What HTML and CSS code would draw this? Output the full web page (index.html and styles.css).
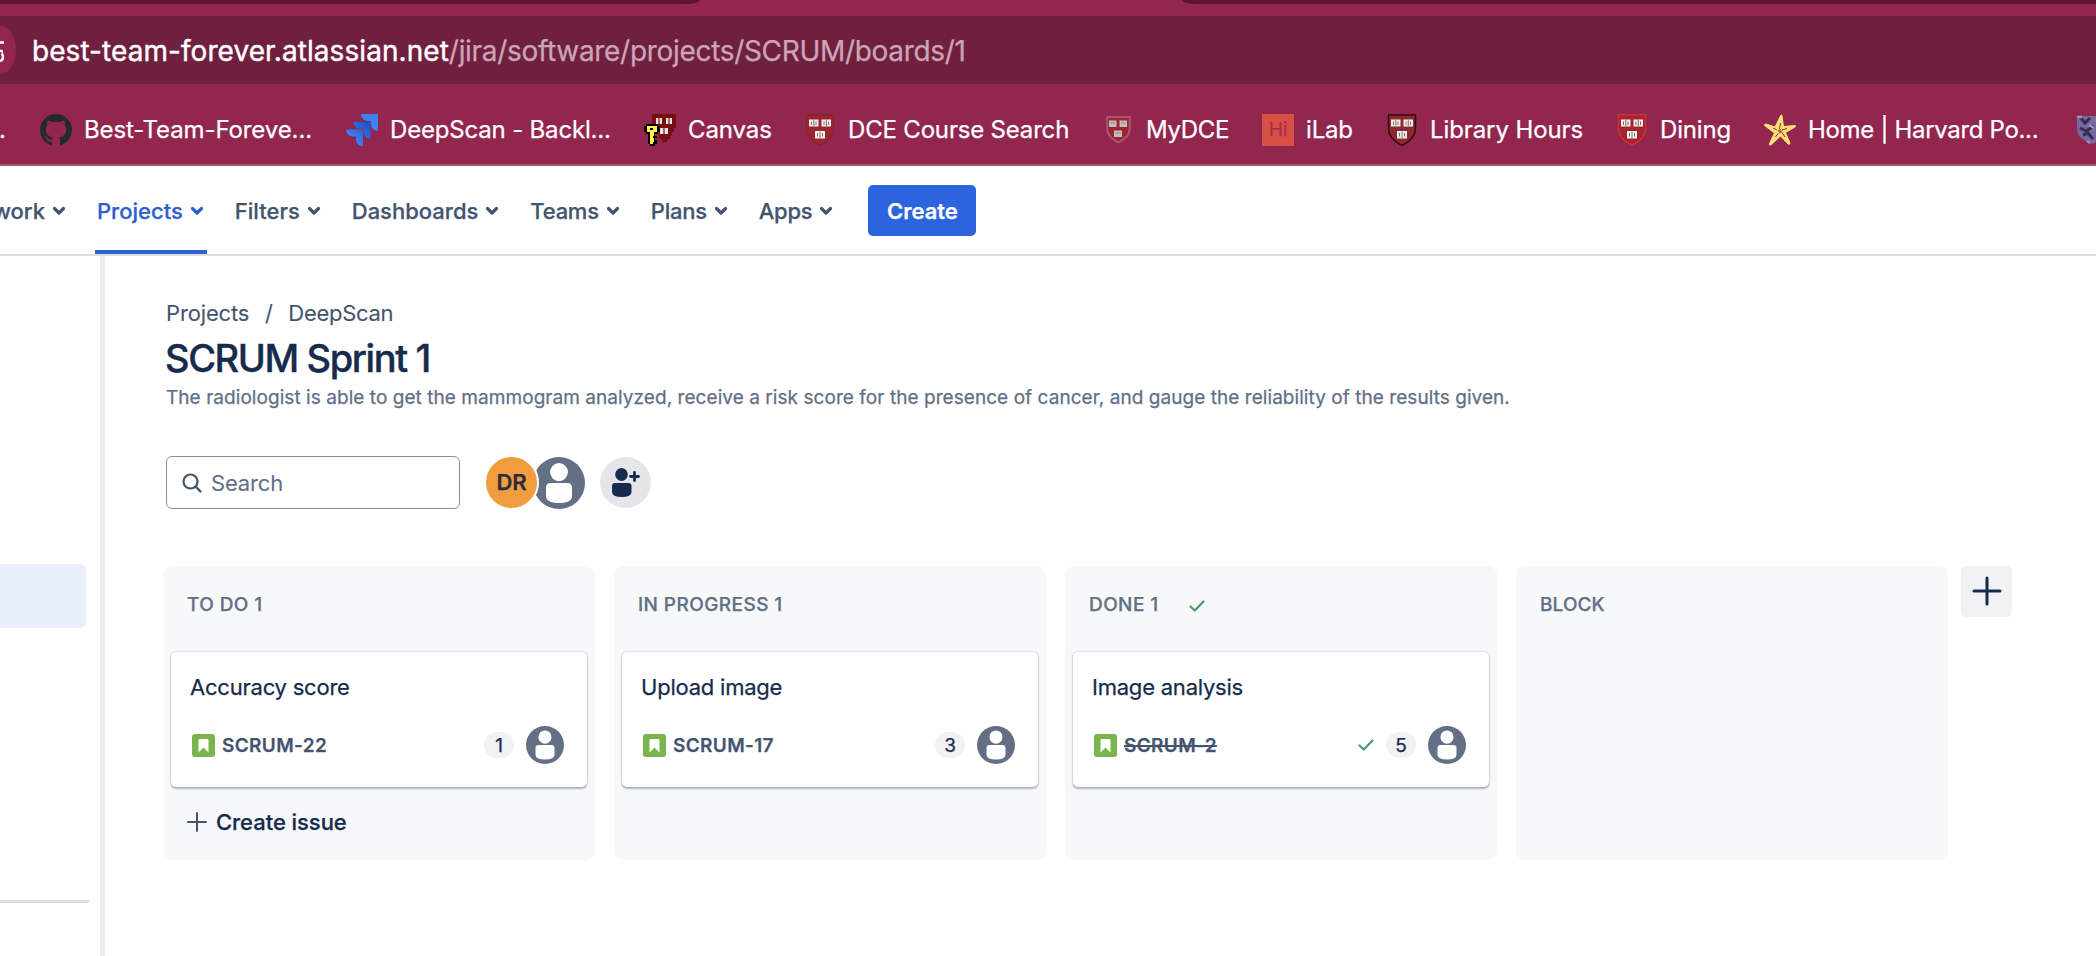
FILE: index.html
```html
<!DOCTYPE html>
<html lang="en">
<head>
<meta charset="utf-8">
<title>SCRUM Sprint 1 - Jira</title>
<link rel="stylesheet" href="styles.css">
</head>
<body>
<svg class="sprite" aria-hidden="true">
  <symbol id="chevron" viewBox="0 0 14 10"><path d="M2.500 2.500l4.500 4.500 4.500-4.500" fill="none" stroke="currentColor" stroke-width="3.200" stroke-linecap="round" stroke-linejoin="round"/></symbol>
  <symbol id="person" viewBox="0 0 32 32"><circle cx="16" cy="16" r="16" fill="#636f85"/><ellipse cx="16" cy="9.3" rx="5.5" ry="5.6" fill="#fff"/><path d="M8 18.6a2.6 2.6 0 0 1 2.6-2.6h10.8a2.6 2.6 0 0 1 2.6 2.6v5.4q0 4.3-8 4.3t-8-4.3z" fill="#fff"/></symbol>
  <symbol id="story" viewBox="0 0 23 23"><rect width="23" height="23" rx="3" fill="#79b54c"/><path d="M7.900 5h7.200q1.400 0 1.400 1.400v12.100l-5-5-5 5V6.400q0-1.400 1.400-1.400z" fill="#fff"/></symbol>
  <symbol id="check" viewBox="0 0 16 12"><path d="M1.500 6.500l4.300 4L14.500 1.500" fill="none" stroke="#4a9a70" stroke-width="2.200" stroke-linecap="round" stroke-linejoin="round"/></symbol>
  <symbol id="books" viewBox="0 0 32 32">
    <path d="M5 5.500h9.500v7H5zM17.500 5.500H27v7h-9.500zM11 17h10v7.500H11z" fill="#f1eeea"/>
    <path d="M7.500 7.500v3.500M9.800 6v6M12 7.500v3.500M20 7.500v3.500M22.300 6v6M24.500 7.500v3.500M13.500 19v3.500M16 17.500v6.500M18.500 19v3.500" stroke="#70605c" stroke-width=".9"/>
  </symbol>
  <symbol id="shield" viewBox="0 0 32 32"><path d="M2.500 1h27v13.500c0 8-6.500 13.500-13.500 17C9 28 2.500 22.500 2.500 14.500z"/></symbol>
</svg>

<header class="browser">
  <div class="tabs"><div class="tab tab-left"></div><div class="tab tab-right"></div></div>
  <div class="address">
    <div class="site-info"><svg viewBox="0 0 16 48"><path d="M0 16.500h4M0 24q1 1.500 3 1.500M0 35q3-.5 3-4 0-2.500-1.500-3.500" fill="none" stroke="#fff" stroke-width="2.400"/></svg></div>
    <div class="url"><span class="host">best-team-forever.atlassian.net</span><span class="path">/jira/software/projects/SCRUM/boards/1</span></div>
  </div>
  <nav class="bookmarks">
    <div class="bookmark cut">.</div>
    <div class="bookmark"><svg viewBox="0 0 16 16"><path fill="#24292e" fill-rule="evenodd" d="M8 0C3.580 0 0 3.580 0 8c0 3.540 2.290 6.530 5.470 7.590.4.070.55-.17.55-.38 0-.19-.01-.82-.01-1.490-2.010.37-2.530-.49-2.690-.94-.09-.23-.48-.94-.82-1.130-.28-.15-.68-.52-.01-.53.63-.01 1.080.58 1.230.82.72 1.210 1.870.87 2.330.66.070-.52.28-.87.51-1.070-1.780-.2-3.640-.89-3.640-3.950 0-.87.31-1.590.82-2.150-.08-.2-.36-1.020.08-2.120 0 0 .67-.21 2.200.82.64-.18 1.320-.27 2-.27s1.360.09 2 .27c1.530-1.040 2.200-.82 2.200-.82.44 1.100.16 1.920.08 2.120.51.56.82 1.270.82 2.150 0 3.070-1.870 3.750-3.650 3.950.29.25.54.73.54 1.480 0 1.070-.01 1.930-.01 2.200 0 .21.15.46.55.38A8.010 8.010 0 0 0 16 8c0-4.420-3.580-8-8-8z"/></svg><span>Best-Team-Foreve...</span></div>
    <div class="bookmark"><svg viewBox="0 0 32 32"><defs><linearGradient id="jg" x1="1" y1="0" x2="0" y2="1"><stop offset=".1" stop-color="#1f55c4"/><stop offset=".7" stop-color="#3f80f5"/></linearGradient></defs><path d="M15 0h17v17a7 7 0 0 1-7-7V7h-3a7 7 0 0 1-7-7z" fill="#3f80f5"/><path d="M7.500 7.800h17v17a7 7 0 0 1-7-7v-3h-3a7 7 0 0 1-7-7zM0 15.500h17v17a7 7 0 0 1-7-7v-3H7a7 7 0 0 1-7-7z" fill="url(#jg)"/></svg><span class="tight">DeepScan - Backl...</span></div>
    <div class="bookmark"><svg viewBox="0 0 32 32"><path d="M8 0h24v14h-2v4h-2v4h-2v3h-3v3h-5v-3h-3v-5H8z" fill="#7a0f12"/><path d="M12 4h6v6h-6zM22 4h6v6h-6zM16 14h8v6h-8z" fill="#e9e5e4"/><path d="M15 4v6M25 4v6M20 14v6" stroke="#7a0f12" stroke-width="1.200"/><path d="M2 10h12v2h2v6h-2v2h-3v2h2v2h-2v2h2v4h-2v2H6v-2H4V20H2v-2H0v-6h2z" fill="#000"/><path d="M3 12h10v6h-3v4h-1v2h1v4H9v2H6V18H3z" fill="#ffef4a"/><path d="M6 14h3v2H6z" fill="#000"/></svg><span>Canvas</span></div>
    <div class="bookmark"><svg viewBox="0 0 32 32"><use href="#shield" fill="#9c2430" stroke="#82222c"/><use href="#books"/></svg><span class="tight">DCE Course Search</span></div>
    <div class="bookmark"><svg viewBox="0 0 32 32"><g transform="translate(3 2) scale(.84)"><use href="#shield" fill="#9b2431" stroke="#a85372" stroke-width="2.500"/></g><path d="M7 6.500h7.500v6.500H7zM17.500 6.500H25v6.500h-7.500zM12 16.500h8v6.500h-8z" fill="#c2bcbc"/><path d="M8.500 9h4.500M19 9h4.500M13.500 19h5" stroke="#8b8485"/></svg><span class="tighter">MyDCE</span></div>
    <div class="bookmark"><span class="hi">Hi</span><span class="tight">iLab</span></div>
    <div class="bookmark"><svg viewBox="0 0 32 32"><use href="#shield" fill="#8d2831" stroke="#300a12" stroke-width="1.500"/><use href="#books"/></svg><span>Library Hours</span></div>
    <div class="bookmark"><svg viewBox="0 0 32 32"><use href="#shield" fill="#a42430" stroke="#d22d31" stroke-width="1.500"/><use href="#books"/></svg><span class="tight">Dining</span></div>
    <div class="bookmark"><svg viewBox="0 0 32 32"><path d="M17 1q1-.5 1 1l1.500 10.500L31 11.500q1.500.5 0 1.500l-9.500 5.500L26 29q0 2-2 1l-7.500-8L7 31q-2 .5-1.500-1.500L10.500 19 .5 11.500q-.5-1.500 1.500-1.500l9 3z" fill="#fbe077" stroke="#fbe077"/><path d="M16.500 9l-1 6M23 14.500l-5 1.500M21 23l-3-4.500M11.500 23l2.500-3.500M9 14l4 2" stroke="#92264e" stroke-width="1"/><path d="M13.500 16.500l3-1.500 2 2.500-2.500 2.500z" fill="#a87435"/></svg><span class="tighter-home">Home | Harvard Po...</span></div>
    <div class="bookmark"><svg viewBox="0 0 32 32"><path d="M1 2h29v13c0 8-7 12-14 15C9 27 1 23 1 15z" fill="#75699d"/><path d="M4 3l5 6 5-5M4 14l6 3 8-5M7 21l5-2 5 6" fill="none" stroke="#352d55" stroke-width="3"/><path d="M1 3h5M13 11l5 3M11 27l3 2" stroke="#9b90be" stroke-width="2.500"/></svg></div>
  </nav>
</header>

<nav class="topnav">
  <div class="nav-item work">work<svg><use href="#chevron"/></svg></div>
  <div class="nav-item active">Projects<svg><use href="#chevron"/></svg></div>
  <div class="nav-item">Filters<svg><use href="#chevron"/></svg></div>
  <div class="nav-item">Dashboards<svg><use href="#chevron"/></svg></div>
  <div class="nav-item snug">Teams<svg><use href="#chevron"/></svg></div>
  <div class="nav-item snug">Plans<svg><use href="#chevron"/></svg></div>
  <div class="nav-item snug">Apps<svg><use href="#chevron"/></svg></div>
  <button class="create">Create</button>
</nav>

<div class="workspace">
  <aside class="sidebar"><div class="selected"></div><div class="divider"></div></aside>
  <main class="content">
    <div class="breadcrumbs"><span>Projects</span><span class="slash">/</span><span class="tight">DeepScan</span></div>
    <h1>SCRUM Sprint 1</h1>
    <p class="goal">The radiologist is able to get the mammogram analyzed, receive a risk score for the presence of cancer, and gauge the reliability of the results given.</p>
    <div class="filters">
      <div class="search"><svg viewBox="0 0 20 20"><circle cx="8.500" cy="8.500" r="7" fill="none" stroke="#44546f" stroke-width="2.200"/><path d="M13.700 13.700L18.500 18.500" stroke="#44546f" stroke-width="2.400" stroke-linecap="round"/></svg><span>Search</span></div>
      <div class="avatar-dr">DR</div>
      <svg class="avatar-person"><use href="#person"/></svg>
      <div class="add-people"><svg viewBox="0 0 28 30"><ellipse cx="9.500" cy="6.500" rx="6.300" ry="6.500" fill="#172b4d"/><path d="M0 18q0-3 3-3h13.500q3 0 3 3v6q0 5-9.750 5T0 24z" fill="#172b4d"/><path d="M22.500 4.500v8M18.500 8.500h8" stroke="#172b4d" stroke-width="2.800" stroke-linecap="round"/></svg></div>
    </div>
    <div class="board">
      <section class="column">
        <h2>TO DO 1</h2>
        <article class="card"><div class="title">Accuracy score</div><div class="meta"><svg class="story"><use href="#story"/></svg><span class="key">SCRUM-22</span><span class="points">1</span><svg class="assignee"><use href="#person"/></svg></div></article>
        <div class="create-issue"><svg viewBox="0 0 20 20"><path d="M10 1v18M1 10h18" stroke="#44546f" stroke-width="2" stroke-linecap="round"/></svg>Create issue</div>
      </section>
      <section class="column">
        <h2>IN PROGRESS 1</h2>
        <article class="card"><div class="title">Upload image</div><div class="meta"><svg class="story"><use href="#story"/></svg><span class="key">SCRUM-17</span><span class="points">3</span><svg class="assignee"><use href="#person"/></svg></div></article>
      </section>
      <section class="column">
        <h2>DONE 1<svg class="check"><use href="#check"/></svg></h2>
        <article class="card"><div class="title">Image analysis</div><div class="meta"><svg class="story"><use href="#story"/></svg><span class="key done">SCRUM-2</span><svg class="check"><use href="#check"/></svg><span class="points">5</span><svg class="assignee"><use href="#person"/></svg></div></article>
      </section>
      <section class="column"><h2 class="flat">BLOCK</h2></section>
      <div class="add-column"><svg viewBox="0 0 30 30"><path d="M15 2v26M2 15h26" stroke="#172b4d" stroke-width="3" stroke-linecap="round"/></svg></div>
    </div>
  </main>
</div>
</body>
</html>
```
FILE: styles.css
```css
* { box-sizing: border-box; }
body { margin: 0; width: 2096px; height: 956px; overflow: hidden; background: #fff; color: #172b4d; font-family: Inter, sans-serif; white-space: nowrap; display: flex; flex-direction: column; -webkit-text-stroke: .25px; }
h1, h2, p { margin: 0; font-weight: 400; }
svg { flex: none; display: block; }
.sprite { display: none; }

.browser { flex: none; height: 166px; background: #92264e; border-bottom: 2px solid #ac5375; }
.tabs { height: 16px; display: flex; justify-content: space-between; }
.tab { height: 4px; background: #5c142f; }
.tab-left { width: 700px; border-radius: 0 0 14px 0 / 0 0 4px 0; }
.tab-right { width: 914px; border-radius: 0 0 0 14px / 0 0 0 4px; }
.address { height: 68px; background: #70203f; display: flex; align-items: center; }
.site-info { width: 16px; height: 48px; background: #92264e; border-radius: 0 16px 16px 0 / 0 24px 24px 0; }
.site-info svg { width: 16px; height: 48px; }
.url { margin-left: 16px; padding-top: 1px; font-size: 28px; line-height: 34px; }
.host { color: #fff; letter-spacing: .06px; -webkit-text-stroke: .4px; }
.path { color: #cda4b5; letter-spacing: -.31px; }
.bookmarks { height: 80px; padding-top: 12px; display: grid; align-items: center; grid-template-columns: 40px 306px 298px 160px 298px 160px 124px 230px 148px 312px 20px; }
.bookmark { height: 32px; display: flex; align-items: center; gap: 12px; color: #fff; font-size: 24px; line-height: 30px; letter-spacing: -.1px; min-width: 0; }
.bookmark svg { width: 32px; height: 32px; }
.bookmark.cut { text-indent: -1px; }
.bookmark .tight { letter-spacing: -.18px; }
.bookmark .tighter { letter-spacing: -.3px; }
.bookmark .tighter-home { letter-spacing: -.32px; }
.bookmark .hi { width: 32px; height: 32px; background: #d84f45; color: #a62f4b; font: 400 19px/32px Inter, sans-serif; text-align: center; }

.topnav { flex: none; height: 90px; border-bottom: 2px solid #dedfe2; display: flex; align-items: stretch; gap: 31px; overflow: hidden; }
.nav-item { display: flex; align-items: center; gap: 7px; padding-top: 2px; color: #44546f; font-size: 22px; font-weight: 500; position: relative; flex: none; }
.nav-item svg { width: 14px; height: 10px; }
.nav-item.work { width: 67px; margin-left: -1px; justify-content: flex-end; }
.nav-item.snug { letter-spacing: -.25px; }
.nav-item.active { color: #2c60d0; }
.nav-item.active::after { content: ""; position: absolute; left: -2px; right: -3px; bottom: -1px; height: 5px; background: #2e62d3; }
.create { align-self: center; margin: 1px 0 0 4px; width: 108px; height: 51px; padding: 0; border: 0; border-radius: 5px; background: #2c64dd; color: #fff; font: 600 22px Inter, sans-serif; }

.workspace { flex: 1; display: flex; }
.sidebar { width: 105px; border-right: 5px solid #ededf0; padding-top: 308px; }
.selected { width: 86px; height: 64px; background: #e9f0fc; border-radius: 0 6px 6px 0; }
.divider { width: 89px; height: 3px; margin-top: 272px; background: #dddee5; }
.content { padding: 43px 0 0 58px; }
.breadcrumbs { height: 28px; margin-left: 3px; display: flex; align-items: center; color: #44546f; font-size: 22px; letter-spacing: -.15px; -webkit-text-stroke: .1px; }
.breadcrumbs .slash { width: 39px; text-align: center; }
.breadcrumbs .tight { letter-spacing: -.28px; }
h1 { margin: 9px 0 0 2px; height: 44px; font-size: 38px; line-height: 44px; font-weight: 500; letter-spacing: -1.4px; -webkit-text-stroke: .4px; }
.goal { margin: 6px 0 0 3px; height: 24px; color: #626f86; font-size: 19px; line-height: 24px; letter-spacing: .055px; }
.filters { margin: 46px 0 0 3px; height: 53px; display: flex; align-items: center; }
.search { width: 294px; height: 53px; border: 1.500px solid #8590a2; border-radius: 6px; padding-left: 15px; display: flex; align-items: center; gap: 9px; color: #626f86; font-size: 22px; letter-spacing: -.15px; -webkit-text-stroke: .1px; }
.search svg { width: 20px; height: 20px; }
.avatar-dr { width: 55px; height: 55px; margin-left: 24px; border: 2px solid #fff; border-radius: 50%; background: #f09d3f; color: #2a2c3a; font-size: 22px; line-height: 51px; font-weight: 600; text-align: center; position: relative; z-index: 1; }
.avatar-person { width: 52px; height: 52px; margin-left: -6px; }
.add-people { width: 51px; height: 51px; margin-left: 15px; border-radius: 50%; background: #e4e6ea; display: flex; align-items: center; justify-content: center; }
.add-people svg { width: 28px; height: 30px; margin-left: 1px; }

.board { margin-top: 57px; display: flex; gap: 19px; }
.column { width: 432px; height: 294px; border-radius: 9px; background: #f7f8fa; padding: 0 8px; }
.column h2 { height: 86px; padding: 27px 0 0 16px; display: flex; color: #626f86; font-size: 19px; line-height: 24px; font-weight: 500; letter-spacing: .42px; }
.column h2.flat { letter-spacing: .1px; }
.check { width: 16px; height: 12px; }
h2 .check { margin: 7px 0 0 30px; }
.card { height: 135px; width: 416px; padding: 21px 23px 0 19px; border-radius: 5px; background: #fff; box-shadow: 0 2px 2px rgba(9, 30, 66, .28), 0 0 2px rgba(9, 30, 66, .3); }
.title { height: 28px; font-size: 22px; line-height: 28px; letter-spacing: -.22px; }
.meta { margin-top: 24px; height: 40px; display: flex; align-items: center; }
.story { width: 23px; height: 23px; margin-left: 2px; }
.key { margin-left: 7px; margin-right: auto; color: #44546f; font-size: 19px; font-weight: 600; letter-spacing: .35px; }
.key.done { text-decoration: line-through; text-decoration-thickness: 1.500px; }
.meta .check { margin-right: 12px; }
.points { width: 30px; height: 26px; border-radius: 13px; background: #f1f2f4; font-size: 19px; line-height: 27px; text-align: center; }
.assignee { width: 38px; height: 38px; margin-left: 12px; }
.create-issue { margin-top: 20px; height: 30px; padding-left: 16px; display: flex; align-items: center; gap: 9px; font-size: 22px; font-weight: 500; letter-spacing: -.05px; }
.create-issue svg { width: 20px; height: 20px; }
.add-column { width: 51px; height: 51px; margin-left: -6px; border-radius: 5px; background: #f1f2f4; display: flex; align-items: center; justify-content: center; }
.add-column svg { width: 30px; height: 30px; margin-top: -2px; }
```
